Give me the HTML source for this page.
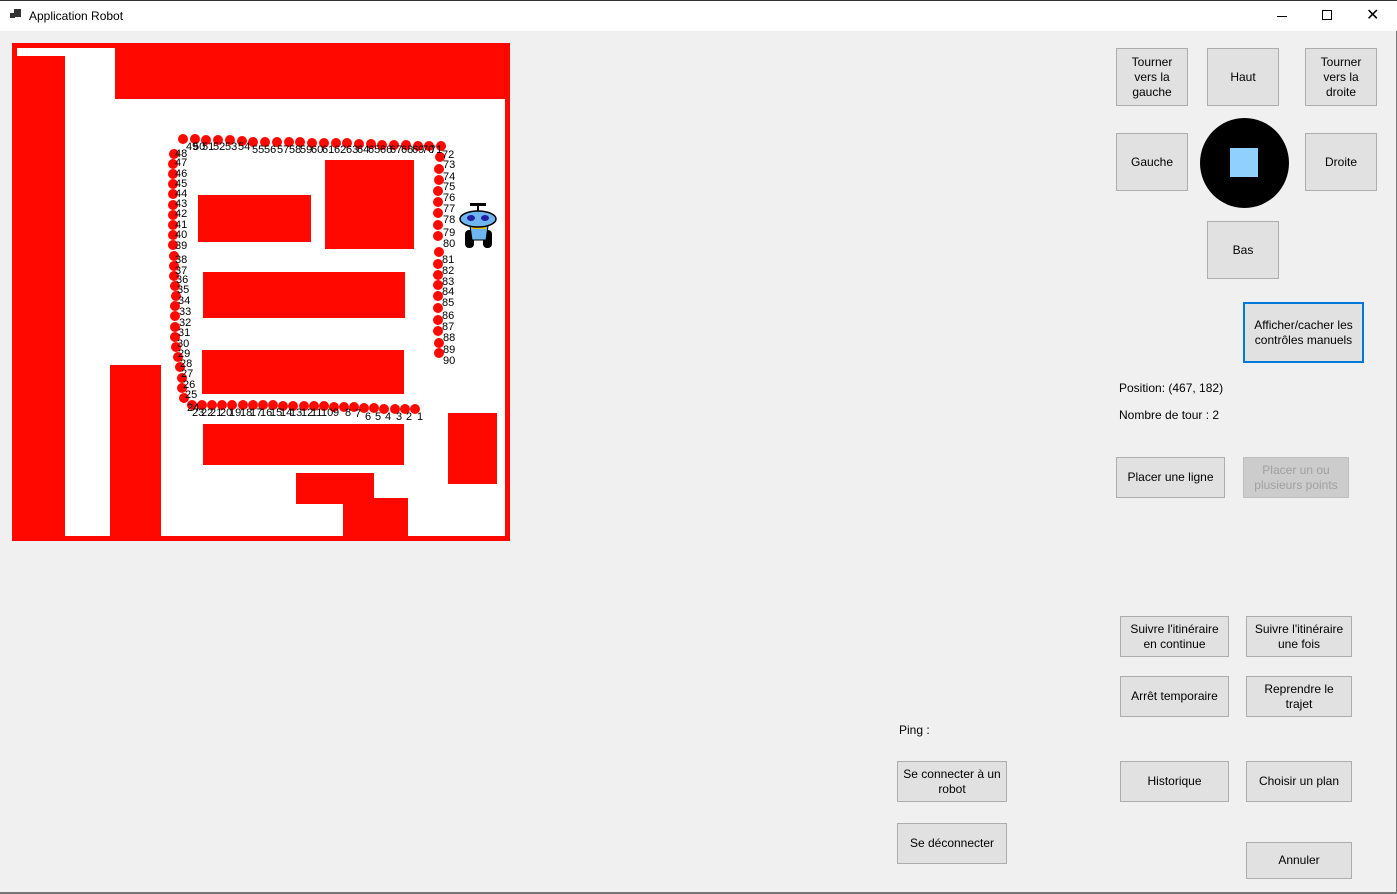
<!DOCTYPE html>
<html><head><meta charset="utf-8"><style>
*{margin:0;padding:0;box-sizing:border-box}
body{width:1397px;height:894px;background:#f0f0f0;font-family:"Liberation Sans",sans-serif;font-size:12px;color:#000;position:relative;overflow:hidden}
.tb{position:absolute;left:0;top:0;width:1397px;height:31px;background:#fff;border-top:1px solid #333}
.b{position:absolute;background:#e1e1e1;border:1px solid #adadad;display:flex;align-items:center;justify-content:center;text-align:center;line-height:15px;font-size:12px}
.l{position:absolute;font-size:12px}
</style></head><body>
<div class="tb">
<div style="position:absolute;left:10px;top:12px;width:5px;height:5px;background:#333"></div>
<div style="position:absolute;left:14px;top:8px;width:7px;height:8px;background:#333"></div>
<div class="l" style="left:29px;top:8px">Application Robot</div>
<div style="position:absolute;left:1277px;top:15px;width:10px;height:1px;background:#000"></div>
<div style="position:absolute;left:1322px;top:9px;width:10px;height:10px;border:1px solid #000"></div>
<div style="position:absolute;left:1366px;top:8px;font-size:16px;line-height:14px">✕</div>
</div>
<div style="position:absolute;right:0;top:31px;width:1px;height:863px;background:#777"></div>
<div style="position:absolute;left:0;top:892px;width:1397px;height:2px;background:#777"></div>

<svg style="position:absolute;left:0;top:0" width="520" height="550">
<rect x="12" y="43" width="498" height="498" fill="#ff0800"/>
<polygon points="17,48 115,48 115,99 505,99 505,536 17,536 17,48" fill="#fff"/>
<rect x="17" y="56" width="48" height="480" fill="#ff0800"/>
<g fill="#ff0800">
<rect x="110" y="365" width="51" height="171"/>
<rect x="198" y="195" width="113" height="47"/>
<rect x="325" y="160" width="89" height="89"/>
<rect x="203" y="272" width="202" height="46"/>
<rect x="202" y="350" width="202" height="44"/>
<rect x="203" y="424" width="201" height="41"/>
<rect x="296" y="473" width="78" height="31"/>
<rect x="343" y="498" width="65" height="38"/>
<rect x="448" y="413" width="49" height="71"/>
</g>
<g fill="#ff0800">
<circle cx="415" cy="409" r="5"/><circle cx="405" cy="409" r="5"/><circle cx="395" cy="409" r="5"/><circle cx="384" cy="409" r="5"/><circle cx="374" cy="408" r="5"/><circle cx="364" cy="408" r="5"/><circle cx="354" cy="407" r="5"/><circle cx="344" cy="407" r="5"/><circle cx="334" cy="407" r="5"/><circle cx="324" cy="406" r="5"/><circle cx="314" cy="406" r="5"/><circle cx="304" cy="406" r="5"/><circle cx="293" cy="406" r="5"/><circle cx="283" cy="406" r="5"/><circle cx="273" cy="405" r="5"/><circle cx="263" cy="405" r="5"/><circle cx="253" cy="405" r="5"/><circle cx="243" cy="405" r="5"/><circle cx="232" cy="405" r="5"/><circle cx="222" cy="405" r="5"/><circle cx="212" cy="405" r="5"/><circle cx="202" cy="405" r="5"/><circle cx="192" cy="405" r="5"/>
<circle cx="184" cy="398" r="5"/><circle cx="182" cy="388" r="5"/><circle cx="182" cy="378" r="5"/><circle cx="180" cy="367" r="5"/><circle cx="178" cy="357" r="5"/><circle cx="176" cy="347" r="5"/><circle cx="175" cy="337" r="5"/><circle cx="175" cy="327" r="5"/><circle cx="175" cy="316" r="5"/><circle cx="175" cy="306" r="5"/><circle cx="176" cy="296" r="5"/><circle cx="175" cy="286" r="5"/><circle cx="174" cy="276" r="5"/><circle cx="174" cy="266" r="5"/><circle cx="174" cy="256" r="5"/><circle cx="173" cy="245" r="5"/><circle cx="173" cy="235" r="5"/><circle cx="173" cy="225" r="5"/><circle cx="173" cy="215" r="5"/><circle cx="173" cy="205" r="5"/><circle cx="173" cy="194" r="5"/><circle cx="173" cy="184" r="5"/><circle cx="173" cy="174" r="5"/><circle cx="173" cy="164" r="5"/><circle cx="174" cy="154" r="5"/>
<circle cx="183" cy="139" r="5"/><circle cx="195" cy="139" r="5"/><circle cx="206" cy="140" r="5"/><circle cx="218" cy="140" r="5"/><circle cx="230" cy="140" r="5"/><circle cx="242" cy="141" r="5"/><circle cx="253" cy="142" r="5"/><circle cx="265" cy="142" r="5"/><circle cx="277" cy="142" r="5"/><circle cx="289" cy="142" r="5"/><circle cx="300" cy="142" r="5"/><circle cx="312" cy="143" r="5"/><circle cx="324" cy="143" r="5"/><circle cx="336" cy="143" r="5"/><circle cx="347" cy="143" r="5"/><circle cx="359" cy="144" r="5"/><circle cx="371" cy="144" r="5"/><circle cx="382" cy="145" r="5"/><circle cx="394" cy="145" r="5"/><circle cx="406" cy="145" r="5"/><circle cx="418" cy="146" r="5"/><circle cx="429" cy="146" r="5"/><circle cx="441" cy="146" r="5"/>
<circle cx="440" cy="157" r="5"/><circle cx="439" cy="169" r="5"/><circle cx="439" cy="180" r="5"/><circle cx="438" cy="191" r="5"/><circle cx="438" cy="202" r="5"/><circle cx="438" cy="213" r="5"/><circle cx="438" cy="225" r="5"/><circle cx="438" cy="236" r="5"/><circle cx="439" cy="252" r="5"/><circle cx="438" cy="264" r="5"/><circle cx="438" cy="275" r="5"/><circle cx="438" cy="285" r="5"/><circle cx="438" cy="296" r="5"/><circle cx="438" cy="308" r="5"/><circle cx="438" cy="320" r="5"/><circle cx="438" cy="331" r="5"/><circle cx="439" cy="343" r="5"/><circle cx="439" cy="353" r="5"/>
</g>
<g font-family="Liberation Sans" font-size="11" fill="#000">
<text x="417" y="420">1</text><text x="406" y="420">2</text><text x="396" y="420">3</text><text x="385" y="420">4</text><text x="375" y="420">5</text><text x="365" y="420">6</text><text x="355" y="417">7</text><text x="345" y="416">8</text><text x="333" y="416">9</text><text x="321" y="416">10</text><text x="311" y="416">11</text><text x="301" y="416">12</text><text x="290" y="416">13</text><text x="280" y="416">14</text><text x="270" y="416">15</text><text x="260" y="416">16</text><text x="250" y="416">17</text><text x="240" y="416">18</text><text x="229" y="416">19</text><text x="220" y="416">20</text><text x="210" y="416">21</text><text x="201" y="416">22</text><text x="192" y="416">23</text>
<text x="187" y="411">24</text><text x="185" y="398">25</text><text x="183" y="388">26</text><text x="181" y="377">27</text><text x="180" y="367">28</text><text x="178" y="357">29</text><text x="177" y="347">30</text><text x="178" y="336">31</text><text x="179" y="326">32</text><text x="179" y="315">33</text><text x="178" y="304">34</text><text x="177" y="293">35</text><text x="176" y="283">36</text><text x="175" y="274">37</text><text x="175" y="263">38</text><text x="175" y="249">39</text><text x="175" y="238">40</text><text x="175" y="228">41</text><text x="175" y="217">42</text><text x="175" y="207">43</text><text x="175" y="197">44</text><text x="175" y="187">45</text><text x="175" y="177">46</text><text x="175" y="166">47</text><text x="175" y="157">48</text>
<text x="186" y="150">49</text><text x="193" y="150">50</text><text x="202" y="150">51</text><text x="213" y="150">52</text><text x="225" y="150">53</text><text x="238" y="150">54</text><text x="252" y="153">55</text><text x="264" y="153">56</text><text x="277" y="153">57</text><text x="289" y="153">58</text><text x="300" y="153">59</text><text x="311" y="153">60</text><text x="322" y="153">61</text><text x="334" y="153">62</text><text x="346" y="153">63</text><text x="357" y="153">64</text><text x="368" y="153">65</text><text x="380" y="153">66</text><text x="390" y="153">67</text><text x="401" y="153">68</text><text x="412" y="153">69</text><text x="422" y="153">70</text><text x="430" y="153">71</text>
<text x="442" y="158">72</text><text x="443" y="168">73</text><text x="443" y="180">74</text><text x="443" y="190">75</text><text x="443" y="201">76</text><text x="443" y="212">77</text><text x="443" y="223">78</text><text x="443" y="236">79</text><text x="443" y="247">80</text><text x="442" y="263">81</text><text x="442" y="274">82</text><text x="442" y="285">83</text><text x="442" y="295">84</text><text x="442" y="306">85</text><text x="442" y="319">86</text><text x="442" y="330">87</text><text x="443" y="341">88</text><text x="443" y="353">89</text><text x="443" y="364">90</text>
</g>
<g>
<rect x="470" y="203" width="16" height="3" fill="#000"/>
<rect x="477" y="205" width="2" height="8" fill="#000"/>
<rect x="465" y="230" width="9" height="18" rx="4" fill="#000"/>
<rect x="483" y="230" width="9" height="18" rx="4" fill="#000"/>
<path d="M470 226 L488 226 L486 240 L472 240 Z" fill="#6fb6f0" stroke="#000"/>
<rect x="472" y="225" width="14" height="4" fill="#f0c000"/>
<ellipse cx="478" cy="219" rx="18" ry="8" fill="#6fb6f0" stroke="#000" stroke-width="1.5"/>
<ellipse cx="471" cy="218" rx="4" ry="3" fill="#2020a0"/>
<ellipse cx="485" cy="218" rx="4" ry="3" fill="#2020a0"/>
</g>
</svg>

<div class="b" style="left:1116px;top:48px;width:72px;height:58px">Tourner<br>vers la<br>gauche</div>
<div class="b" style="left:1207px;top:48px;width:72px;height:58px">Haut</div>
<div class="b" style="left:1305px;top:48px;width:72px;height:58px">Tourner<br>vers la<br>droite</div>
<div class="b" style="left:1116px;top:133px;width:72px;height:58px">Gauche</div>
<div style="position:absolute;left:1200px;top:118px;width:89px;height:90px;border-radius:50%;background:#000"></div>
<div style="position:absolute;left:1230px;top:148px;width:28px;height:29px;background:#8fd0ff"></div>
<div class="b" style="left:1305px;top:133px;width:72px;height:58px">Droite</div>
<div class="b" style="left:1207px;top:221px;width:72px;height:58px">Bas</div>
<div class="b" style="left:1243px;top:302px;width:121px;height:61px;border:2px solid #0078d7">Afficher/cacher les<br>contrôles manuels</div>
<div class="l" style="left:1119px;top:381px">Position: (467, 182)</div>
<div class="l" style="left:1119px;top:408px">Nombre de tour : 2</div>
<div class="b" style="left:1116px;top:457px;width:109px;height:41px">Placer une ligne</div>
<div class="b" style="left:1243px;top:457px;width:106px;height:41px;background:#cccccc;border-color:#bfbfbf;color:#a0a0a0">Placer un ou<br>plusieurs points</div>
<div class="b" style="left:1120px;top:616px;width:109px;height:41px">Suivre l'itinéraire<br>en continue</div>
<div class="b" style="left:1246px;top:616px;width:106px;height:41px">Suivre l'itinéraire<br>une fois</div>
<div class="b" style="left:1120px;top:676px;width:109px;height:41px">Arrêt temporaire</div>
<div class="b" style="left:1246px;top:676px;width:106px;height:41px">Reprendre le<br>trajet</div>
<div class="b" style="left:1120px;top:761px;width:109px;height:41px">Historique</div>
<div class="b" style="left:1246px;top:761px;width:106px;height:41px">Choisir un plan</div>
<div class="b" style="left:1246px;top:842px;width:106px;height:37px">Annuler</div>
<div class="l" style="left:899px;top:723px">Ping :</div>
<div class="b" style="left:897px;top:761px;width:110px;height:41px">Se connecter à un<br>robot</div>
<div class="b" style="left:897px;top:823px;width:110px;height:41px">Se déconnecter</div>
</body></html>
